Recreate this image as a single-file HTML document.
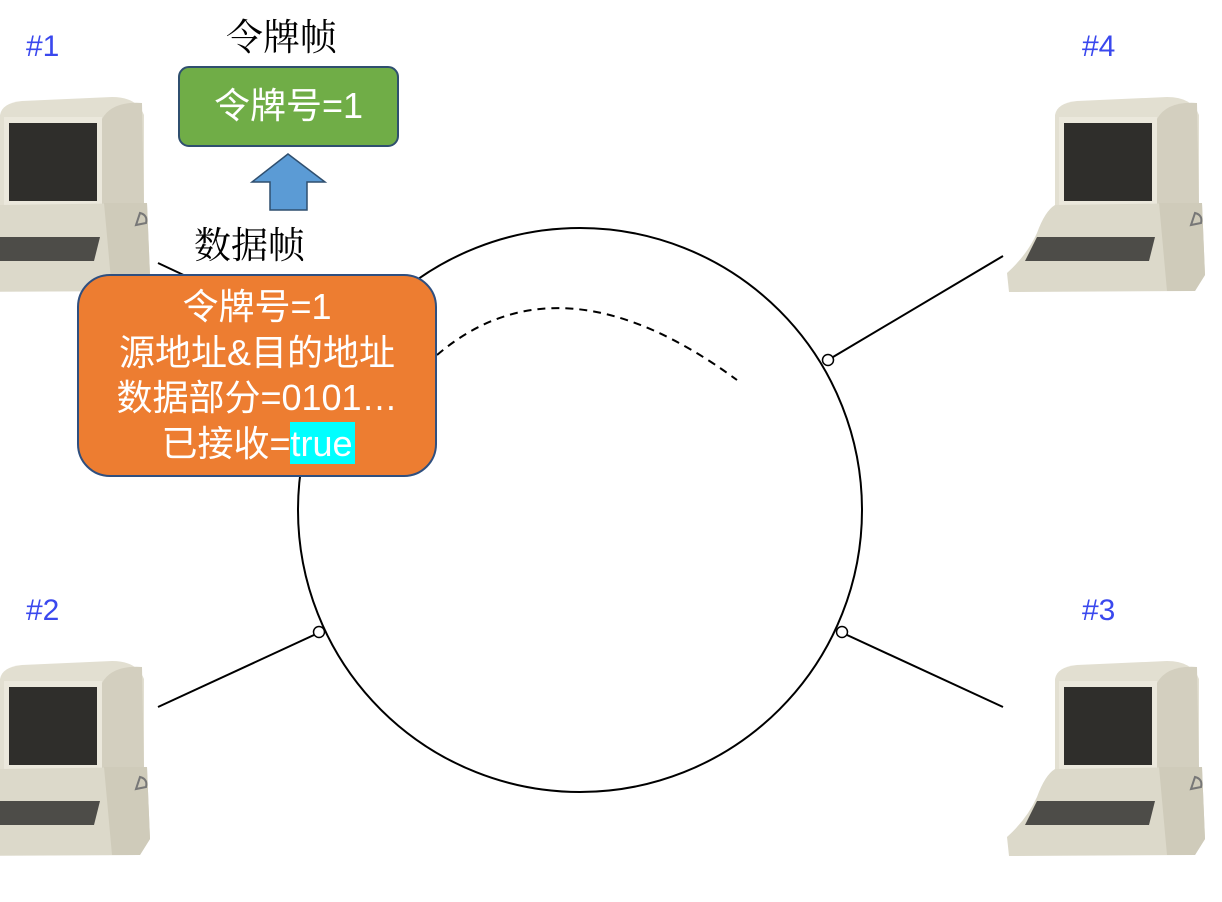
<!DOCTYPE html>
<html><head><meta charset="utf-8"><style>
body{margin:0;width:1222px;height:902px;background:#fff;overflow:hidden;position:relative;font-family:"Liberation Sans","Noto Sans CJK SC",sans-serif}
.lbl{position:absolute;color:#3a48ee;font-size:30px;line-height:30px}
.t{position:absolute;white-space:nowrap}
</style></head><body>
<svg width="1222" height="902" style="position:absolute;left:0;top:0">
<defs>
<g id="pc">
<path d="M48 20 Q50 8 70 6 L160 2 Q185 2 192 20 L192 112 L48 112Z" fill="#e2dfd1"/>
<path d="M150 24 Q160 6 190 8 L192 112 L150 112Z" fill="#d3cfbf"/>
<rect x="52" y="22" width="98" height="88" fill="#ebe8dc"/>
<rect x="57" y="28" width="88" height="78" fill="#2f2e2b"/>
<path d="M48 110 L195 108 L198 180 L188 196 L2 197 L0 178 Q20 160 30 138 Q38 116 48 110Z" fill="#dcd9ca"/>
<path d="M152 108 L195 108 L198 180 L188 196 L160 196Z" fill="#cfcbba"/>
<path d="M30 142 L148 142 L142 166 L18 166Z" fill="#4d4c48"/>
<path d="M188 118 q8 2 6 10 l-10 2z" fill="none" stroke="#777" stroke-width="2"/>
</g>
</defs>
<use href="#pc" x="-48" y="95"/>
<use href="#pc" x="1007" y="95"/>
<use href="#pc" x="-48" y="659"/>
<use href="#pc" x="1007" y="659"/>
<circle cx="580" cy="510" r="282" fill="none" stroke="#000" stroke-width="2"/>
<path d="M437 355 Q560 250 737 380" fill="none" stroke="#000" stroke-width="2" stroke-dasharray="8,6"/>
<line x1="1003" y1="256" x2="833" y2="357" stroke="#000" stroke-width="2"/>
<line x1="158" y1="707" x2="314" y2="635" stroke="#000" stroke-width="2"/>
<line x1="847" y1="635" x2="1003" y2="707" stroke="#000" stroke-width="2"/>
<line x1="158" y1="263" x2="190" y2="278" stroke="#000" stroke-width="2"/>
<circle cx="828" cy="360" r="5.5" fill="#fff" stroke="#000" stroke-width="1.5"/>
<circle cx="319" cy="632" r="5.5" fill="#fff" stroke="#000" stroke-width="1.5"/>
<circle cx="842" cy="632" r="5.5" fill="#fff" stroke="#000" stroke-width="1.5"/>
<rect x="179" y="67" width="219" height="79" rx="10" fill="#70ad47" stroke="#2f4f6f" stroke-width="2"/>
<path d="M288 154 L325 182 L307 182 L307 210 L270 210 L270 182 L252 182Z" fill="#5b9bd5" stroke="#2f4f6f" stroke-width="1.5"/>
<rect x="78" y="275" width="358" height="201" rx="32" fill="#ed7d31" stroke="#2f4f7f" stroke-width="2"/>
<rect x="290" y="422" width="65" height="42" fill="#00ffff"/>
</svg>
<div class="lbl" style="left:26px;top:32px">#1</div>
<div class="lbl" style="left:1082px;top:32px">#4</div>
<div class="lbl" style="left:26px;top:596px">#2</div>
<div class="lbl" style="left:1082px;top:596px">#3</div>
<div class="t" style="left:226px;top:12px;font-size:37px;font-family:'Noto Serif CJK SC',serif;line-height:44px">令牌帧</div>
<div class="t" style="left:194px;top:220px;font-size:37px;font-family:'Noto Serif CJK SC',serif;line-height:44px">数据帧</div>
<div class="t" style="left:179px;top:84px;width:219px;text-align:center;color:#fff;font-size:36px;line-height:44px">令牌号=1</div>
<div class="t" style="left:78px;top:284px;width:358px;text-align:center;color:#fff;font-size:36px;line-height:45.5px">令牌号=1<br>源地址&amp;目的地址<br>数据部分=0101…<br>已接收=true</div>
</body></html>
